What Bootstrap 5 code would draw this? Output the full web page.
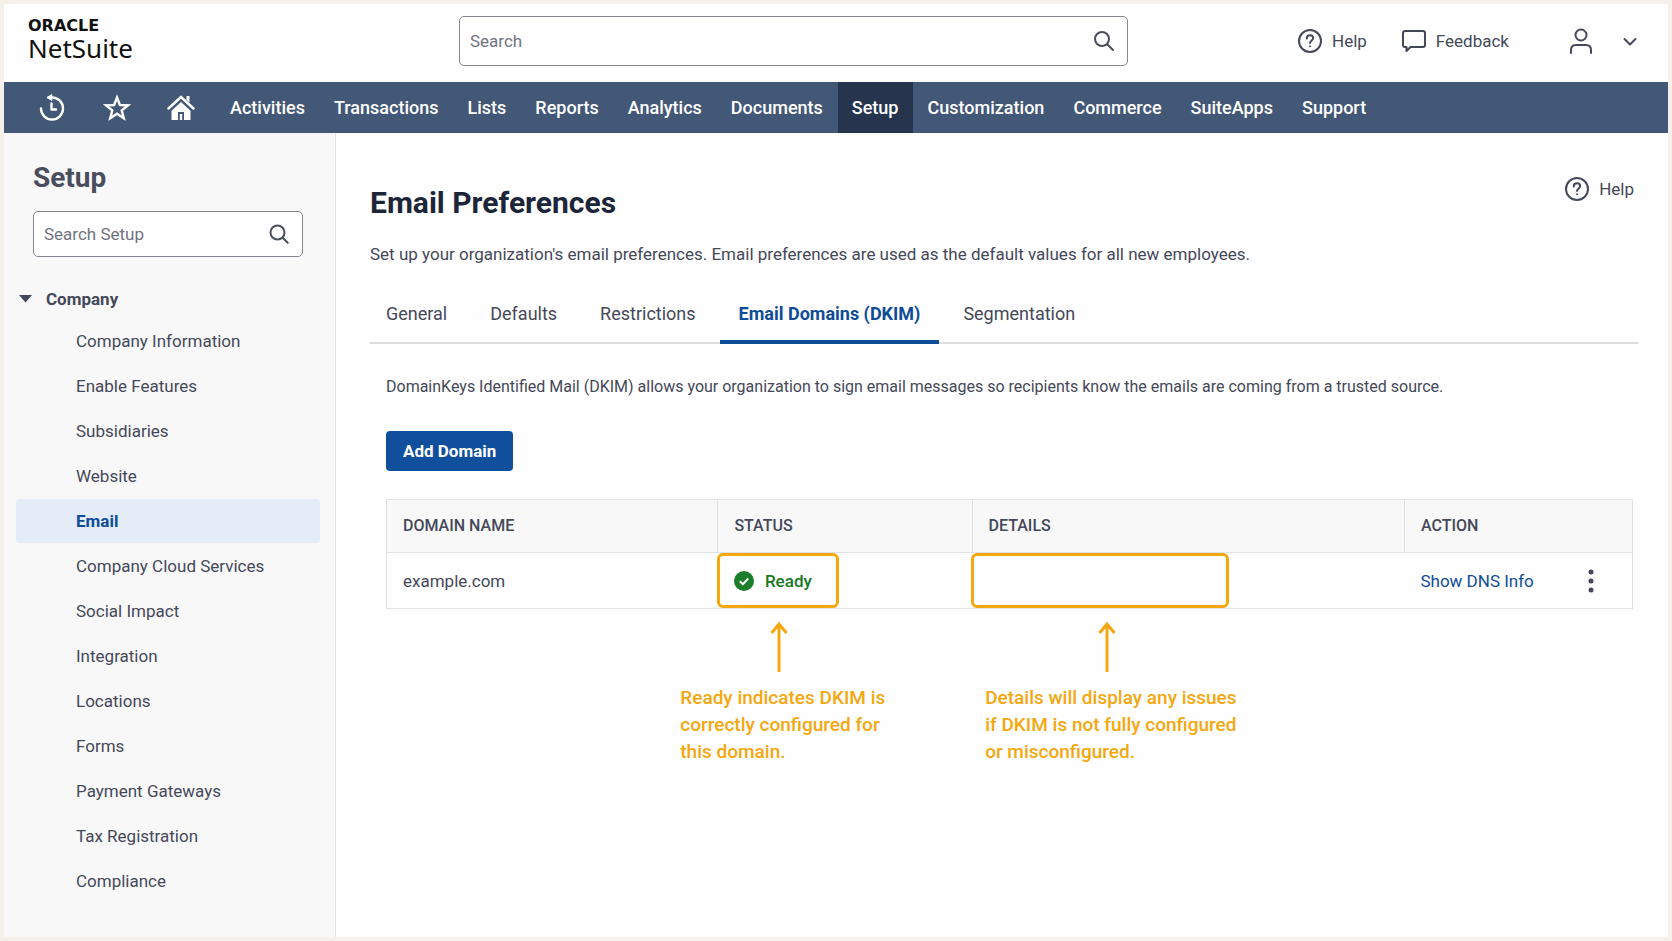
<!DOCTYPE html>
<html lang="en">
<head>
<meta charset="utf-8">
<meta name="viewport" content="width=device-width, initial-scale=1">
<title>Email Preferences - NetSuite</title>
<link href="https://cdn.jsdelivr.net/npm/bootstrap@5.3.0/dist/css/bootstrap.min.css" rel="stylesheet">
<style>
  :root {
    --ink: #454858;
    --ink-dark: #1d2639;
    --brand: #0f4c97;
    --bar: #435776;
    --line: #e0e1e5;
    --callout: #f5a70f;
  }
  body {
    font-family: Roboto, "Liberation Sans", sans-serif;
    font-size: 17px;
    line-height: 24px;
    color: var(--ink);
    background: #f5f1ea;
    padding: 4px;
  }
  a { color: inherit; text-decoration: none; }
  svg { display: block; flex: none; }
  .stroke-icon { fill: none; stroke: currentColor; stroke-linecap: round; stroke-linejoin: round; }
  .app-shell { min-height: calc(100vh - 8px); }

  .app-header {
    display: grid;
    grid-template-columns: 431fr 669fr 510fr;
    height: 78px;
    padding: 0 30px 4px 24px;
    background: #fefefe;
  }
  .brand-logo { color: #111; }
  .brand-top { font: bold 16px/14px "DejaVu Sans", sans-serif; }
  .brand-name { font: 26px/30px "Noto Sans", "Open Sans", sans-serif; }

  .search-box {
    border: 1px solid #858790;
    border-radius: 5px;
    background: #fff;
    color: #4b4e5c;
  }
  .search-box input {
    border: 0;
    outline: 0;
    background: transparent;
    min-width: 0;
    font-size: 17px;
  }
  .search-box input::placeholder { color: #70737e; opacity: 1; }
  .search-main { height: 50px; padding: 0 12px 0 10px; }
  .search-side { height: 46px; padding: 0 13px 0 10px; margin-top: 17px; }
  .plain-btn { border: 0; background: none; padding: 0; color: inherit; }
  .icon-text { display: flex; align-items: center; gap: 9px; }
  .header-tools { gap: 34px; }
  .user-menu { gap: 27px; margin-left: 24px; }

  .app-nav { background: var(--bar); height: 51px; padding-left: 19px; }
  .app-nav .nav-link { color: #fff; font-size: 18px; font-weight: 500; line-height: 51px; padding: 0 14px; margin-left: 1px; }
  .app-nav .nav-link.active { background: #27344d; }
  .app-nav .shortcut { width: 64px; height: 51px; color: #fff; }

  .side-panel {
    width: 332px;
    background: #f8f8f9;
    border-right: 1px solid var(--line);
    padding: 29px 15px 30px 12px;
  }
  .side-head { padding: 0 17px; }
  .side-title { font-size: 28px; line-height: 32px; font-weight: 700; color: #4a4d5b; }
  .side-group { font-weight: 700; gap: 14px; padding-left: 3px; margin: 30px 0 8px; }
  .side-link { display: block; line-height: 44px; padding-left: 60px; margin-bottom: 1px; border-radius: 4px; }
  .side-link.active { background: #e3ecf7; color: var(--brand); font-weight: 700; }

  .work-area { background: #fefefe; padding: 43px 30px 0 34px; }
  .page-title { font-size: 30px; line-height: 54px; font-weight: 700; color: var(--ink-dark); }
  .page-intro { margin: 12px 0 0; }
  .page-tabs { border-bottom: 2px solid #dcdddf; gap: 5px; }
  .page-tabs .nav-link {
    color: var(--ink);
    font-size: 18px;
    line-height: 24px;
    padding: 12px 19px 14px;
    margin-bottom: -2px;
    border-bottom: 4px solid transparent;
  }
  .page-tabs .nav-item:first-child .nav-link { padding-left: 16px; }
  .page-tabs .nav-link.active { color: var(--brand); font-weight: 700; border-bottom-color: var(--brand); }
  .tab-body { padding: 31px 5px 0 16px; }
  .tab-intro { font-size: 16px; }
  .btn-add {
    --bs-btn-color: #fff;
    --bs-btn-bg: #0f4f9c;
    --bs-btn-hover-color: #fff;
    --bs-btn-hover-bg: #0b4285;
    font-size: 17px;
    font-weight: 700;
    line-height: 24px;
    padding: 8px 17px;
    margin: 32px 0 28px;
    border: 0;
    border-radius: 4px;
  }

  .domain-table { table-layout: fixed; border: 1px solid var(--line); }
  .domain-table th {
    background: #f8f8f9;
    border: 1px solid var(--line);
    color: var(--ink);
    font-size: 16px;
    font-weight: 500;
    line-height: 52px;
    padding: 0 16px;
  }
  .domain-table td { height: 56px; padding: 0 16px; position: relative; vertical-align: middle; border: 0; color: var(--ink); background: transparent; }
  .domain-table .c-name { width: 26.6%; }
  .domain-table .c-status { width: 20.4%; }
  .domain-table .c-details { width: 34.7%; }
  .status-ready { color: #17791f; font-weight: 500; gap: 11px; }
  .dns-link { color: var(--brand); }
  .spotlight { position: absolute; inset: 0 auto 0 -1px; border: 3px solid var(--callout); border-radius: 6px; }
  .spotlight-status { width: 122px; }
  .spotlight-details { width: 258px; }

  .callouts { display: grid; grid-template-columns: 32% 1fr; padding: 12px 0 0 23.6%; color: var(--callout); }
  .callout-note { font-size: 19px; line-height: 27px; font-weight: 500; white-space: nowrap; }
  .callout-note svg { margin: 0 auto 11px; stroke-width: 3px; }
  .note-status { width: 198px; }
  .note-details { width: 244px; }
</style>
</head>
<body>
<div class="app-shell d-flex flex-column">
  <header class="app-header align-items-center">
    <a href="#" class="brand-logo d-block">
      <div class="brand-top">ORACLE</div>
      <div class="brand-name">NetSuite</div>
    </a>
    <label class="search-box search-main d-flex align-items-center">
      <input type="search" class="flex-grow-1 p-0" placeholder="Search" aria-label="Search">
      <svg class="stroke-icon" width="22" height="22" viewBox="0 0 22 22" stroke-width="2"><circle cx="9" cy="9" r="7"/><path d="M14.2 14.2 20 20"/></svg>
    </label>
    <div class="header-tools d-flex align-items-center justify-content-end">
      <a href="#" class="icon-text">
        <svg class="stroke-icon" width="26" height="26" viewBox="0 0 26 26" stroke-width="2"><circle cx="13" cy="13" r="11"/><path d="M9.8 10.4c0-1.900 1.300-3.200 3.200-3.200s3.200 1.200 3.200 2.900c0 2.200-3.200 2.500-3.200 4.900"/><circle cx="13" cy="18.300" r=".6" fill="currentColor" stroke-width="1"/></svg>
        Help
      </a>
      <a href="#" class="icon-text">
        <svg class="stroke-icon" width="26" height="26" viewBox="0 0 26 26" stroke-width="2"><path d="M4 3h18q2 0 2 2v12q0 2-2 2H9.500L5.500 23v-4H4q-2 0-2-2V5q0-2 2-2z"/></svg>
        Feedback
      </a>
      <button type="button" class="plain-btn user-menu d-flex align-items-center" aria-label="Account">
        <svg class="stroke-icon" width="28" height="28" viewBox="0 0 28 28" stroke-width="2"><circle cx="14" cy="8" r="5.500"/><path d="M4 26v-3c0-3 2-5 5-5h10c3 0 5 2 5 5v3"/></svg>
        <svg class="stroke-icon" width="16" height="16" viewBox="0 0 16 16" stroke-width="2"><path d="m2.500 6 5.500 5.500L13.500 6"/></svg>
      </button>
    </div>
  </header>

  <nav class="app-nav d-flex" aria-label="Main">
    <a href="#" class="shortcut d-flex align-items-center ps-3" aria-label="Recent records">
      <svg class="stroke-icon" width="26" height="28" viewBox="0 0 26 28" stroke-width="2.400"><path d="M2 14.500A11 11 0 1 0 13 3.500H9.500"/><path d="M12.500 .8 8 3.500l4.500 2.700z" fill="currentColor" stroke-width="1"/><path d="M12.500 9.500v6h4.500"/></svg>
    </a>
    <a href="#" class="shortcut d-flex align-items-center ps-3" aria-label="Shortcuts">
      <svg width="28" height="28" viewBox="0 0 28 28" fill="none" stroke="currentColor" stroke-width="2.400"><path d="m14 3.500 2.900 7.500 8 .4-6.200 5 2.100 7.800-6.800-4.400-6.800 4.400 2.100-7.800-6.200-5 8-.4z"/></svg>
    </a>
    <a href="#" class="shortcut d-flex align-items-center ps-3" aria-label="Home">
      <svg width="28" height="28" viewBox="0 0 28 28" fill="currentColor"><path d="M19.500 2h3v6.500l-3-2.800z"/><path d="M1.500 14.500 14 3l12.500 11.500" fill="none" stroke="currentColor" stroke-width="2.400" stroke-linecap="round"/><path fill-rule="evenodd" d="M14 8 4.500 16.700V26h19v-9.300zM11 26v-8h6v8h-1.800v-6h-2.400v6z"/></svg>
    </a>
    <a href="#" class="nav-link">Activities</a>
    <a href="#" class="nav-link">Transactions</a>
    <a href="#" class="nav-link">Lists</a>
    <a href="#" class="nav-link">Reports</a>
    <a href="#" class="nav-link">Analytics</a>
    <a href="#" class="nav-link">Documents</a>
    <a href="#" class="nav-link active" aria-current="page">Setup</a>
    <a href="#" class="nav-link">Customization</a>
    <a href="#" class="nav-link">Commerce</a>
    <a href="#" class="nav-link">SuiteApps</a>
    <a href="#" class="nav-link">Support</a>
  </nav>

  <div class="d-flex flex-grow-1">
    <aside class="side-panel flex-shrink-0">
      <div class="side-head">
        <h2 class="side-title mb-0">Setup</h2>
        <label class="search-box search-side d-flex align-items-center">
          <input type="search" class="flex-grow-1 p-0" placeholder="Search Setup" aria-label="Search Setup">
          <svg class="stroke-icon" width="20" height="20" viewBox="0 0 20 20" stroke-width="2"><circle cx="8.500" cy="8.500" r="7"/><path d="m13.700 13.700 5 5"/></svg>
        </label>
      </div>
      <button type="button" class="plain-btn side-group d-flex align-items-center" aria-expanded="true">
        <svg width="13" height="8" viewBox="0 0 13 8" fill="currentColor"><path d="M0 0h13L6.500 7.500z"/></svg>
        Company
      </button>
      <nav aria-label="Setup">
        <a href="#" class="side-link">Company Information</a>
        <a href="#" class="side-link">Enable Features</a>
        <a href="#" class="side-link">Subsidiaries</a>
        <a href="#" class="side-link">Website</a>
        <a href="#" class="side-link active">Email</a>
        <a href="#" class="side-link">Company Cloud Services</a>
        <a href="#" class="side-link">Social Impact</a>
        <a href="#" class="side-link">Integration</a>
        <a href="#" class="side-link">Locations</a>
        <a href="#" class="side-link">Forms</a>
        <a href="#" class="side-link">Payment Gateways</a>
        <a href="#" class="side-link">Tax Registration</a>
        <a href="#" class="side-link">Compliance</a>
      </nav>
    </aside>

    <main class="work-area flex-grow-1">
      <div class="d-flex justify-content-between align-items-start">
        <h1 class="page-title mb-0">Email Preferences</h1>
        <a href="#" class="icon-text me-1">
          <svg class="stroke-icon" width="26" height="26" viewBox="0 0 26 26" stroke-width="2"><circle cx="13" cy="13" r="11"/><path d="M9.800 10.400c0-1.900 1.300-3.200 3.200-3.200s3.200 1.200 3.200 2.900c0 2.200-3.200 2.500-3.200 4.900"/><circle cx="13" cy="18.300" r=".6" fill="currentColor" stroke-width="1"/></svg>
          Help
        </a>
      </div>
      <p class="page-intro">Set up your organization's email preferences. Email preferences are used as the default values for all new employees.</p>
      <ul class="nav page-tabs mt-4">
        <li class="nav-item"><a href="#" class="nav-link">General</a></li>
        <li class="nav-item"><a href="#" class="nav-link">Defaults</a></li>
        <li class="nav-item"><a href="#" class="nav-link">Restrictions</a></li>
        <li class="nav-item"><a href="#" class="nav-link active" aria-current="page">Email Domains (DKIM)</a></li>
        <li class="nav-item"><a href="#" class="nav-link">Segmentation</a></li>
      </ul>
      <section class="tab-body">
        <p class="tab-intro mb-0">DomainKeys Identified Mail (DKIM) allows your organization to sign email messages so recipients know the emails are coming from a trusted source.</p>
        <button type="button" class="btn btn-add d-block">Add Domain</button>
        <table class="table domain-table mb-0">
          <thead>
            <tr>
              <th class="c-name" scope="col">DOMAIN NAME</th>
              <th class="c-status" scope="col">STATUS</th>
              <th class="c-details" scope="col">DETAILS</th>
              <th scope="col">ACTION</th>
            </tr>
          </thead>
          <tbody>
            <tr>
              <td>example.com</td>
              <td>
                <div class="status-ready d-flex align-items-center">
                  <svg width="20" height="20" viewBox="0 0 20 20"><circle cx="10" cy="10" r="10" fill="#1c7d2b"/><path d="m5.800 10.300 3 3 5.400-5.800" fill="none" stroke="#fff" stroke-width="2"/></svg>
                  Ready
                </div>
                <span class="spotlight spotlight-status"></span>
              </td>
              <td><span class="spotlight spotlight-details"></span></td>
              <td>
                <div class="d-flex align-items-center justify-content-between">
                  <a href="#" class="dns-link">Show DNS Info</a>
                  <button type="button" class="plain-btn me-3" aria-label="More actions">
                    <svg width="18" height="24" viewBox="0 0 18 24" fill="currentColor"><circle cx="9" cy="3" r="2.500"/><circle cx="9" cy="12" r="2.500"/><circle cx="9" cy="21" r="2.500"/></svg>
                  </button>
                </div>
              </td>
            </tr>
          </tbody>
        </table>
        <div class="callouts">
          <div class="callout-note note-status">
            <svg width="20" height="52" viewBox="0 0 20 52" fill="none" stroke="currentColor"><path d="M10 51V3M2.500 12 10 3l7.500 9"/></svg>
            Ready indicates DKIM is<br>correctly configured for<br>this domain.
          </div>
          <div class="callout-note note-details">
            <svg width="20" height="52" viewBox="0 0 20 52" fill="none" stroke="currentColor"><path d="M10 51V3M2.500 12 10 3l7.500 9"/></svg>
            Details will display any issues<br>if DKIM is not fully configured<br>or misconfigured.
          </div>
        </div>
      </section>
    </main>
  </div>
</div>
<script src="https://cdn.jsdelivr.net/npm/bootstrap@5.3.0/dist/js/bootstrap.bundle.min.js"></script>
</body>
</html>
